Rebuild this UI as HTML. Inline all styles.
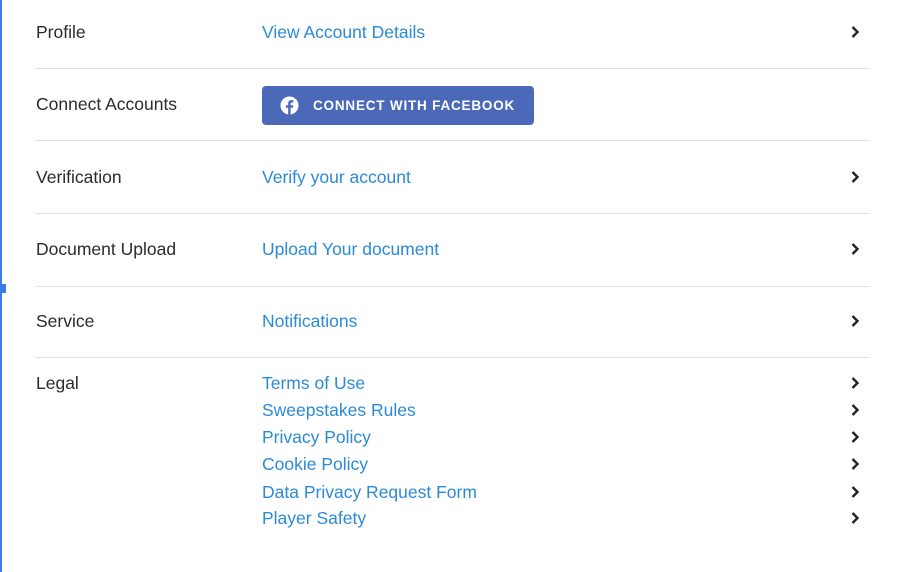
<!DOCTYPE html>
<html><head><meta charset="utf-8"><style>
*{margin:0;padding:0;box-sizing:border-box}
body{width:900px;height:572px;background:#fff;font-family:"Liberation Sans",sans-serif;position:relative;overflow:hidden;color:#2b2b2b}
.bar{position:absolute;left:0;top:0;width:2px;height:572px;background:#3b7ce8}
.sq{position:absolute;left:0;top:284px;width:6px;height:9px;background:#3b7ce8}
.hr{position:absolute;left:35px;width:835px;height:1px;background:#e2e2e2}
.t{position:absolute;font-size:17.5px;line-height:20px;white-space:nowrap}
.l{left:36px}
.a{left:262px;color:#2b8ad6}
.c{position:absolute;left:850px;width:10px;height:14px}
.btn{position:absolute;left:262px;top:86px;width:272px;height:39px;background:#4c68b9;border-radius:4px;color:#fff;font-size:13.5px;font-weight:bold;letter-spacing:0.8px;line-height:39px;padding-left:51px}
.fb{position:absolute;left:18px;top:10px;width:19px;height:19px}
</style></head><body>
<div class="bar"></div><div class="sq"></div>
<div class="t l" style="top:22px">Profile</div>
<div class="t a" style="top:22px">View Account Details</div>
<div class="hr" style="top:68px"></div>
<div class="t l" style="top:94px">Connect Accounts</div>
<div class="btn"><svg class="fb" viewBox="0 0 20 20"><circle cx="10" cy="10" r="9.5" fill="#fff"/><path d="M11.2 20V12.4h2.3l.4-2.7h-2.7V8.1c0-.8.3-1.3 1.4-1.3h1.4V4.4c-.3 0-1.1-.1-2-.1-2 0-3.4 1.2-3.4 3.4v2H6.3v2.7h2.3V20z" fill="#4c68b9"/></svg>CONNECT WITH FACEBOOK</div>
<div class="hr" style="top:140px"></div>
<div class="t l" style="top:167px">Verification</div>
<div class="t a" style="top:167px">Verify your account</div>
<div class="hr" style="top:213px"></div>
<div class="t l" style="top:239px">Document Upload</div>
<div class="t a" style="top:239px">Upload Your document</div>
<div class="hr" style="top:286px"></div>
<div class="t l" style="top:311px">Service</div>
<div class="t a" style="top:311px">Notifications</div>
<div class="hr" style="top:357px"></div>
<div class="t l" style="top:373px">Legal</div>
<div class="t a" style="top:373px">Terms of Use</div>
<div class="t a" style="top:400px">Sweepstakes Rules</div>
<div class="t a" style="top:427px">Privacy Policy</div>
<div class="t a" style="top:454px">Cookie Policy</div>
<div class="t a" style="top:482px">Data Privacy Request Form</div>
<div class="t a" style="top:508px">Player Safety</div>
<svg width="0" height="0" style="position:absolute"><defs><path id="ch" d="M2.5 2l5 5-5 5" fill="none" stroke="#222" stroke-width="2.4"/></defs></svg>
<svg class="c" style="top:25px"><use href="#ch"/></svg>
<svg class="c" style="top:170px"><use href="#ch"/></svg>
<svg class="c" style="top:242px"><use href="#ch"/></svg>
<svg class="c" style="top:314px"><use href="#ch"/></svg>
<svg class="c" style="top:376px"><use href="#ch"/></svg>
<svg class="c" style="top:403px"><use href="#ch"/></svg>
<svg class="c" style="top:430px"><use href="#ch"/></svg>
<svg class="c" style="top:457px"><use href="#ch"/></svg>
<svg class="c" style="top:485px"><use href="#ch"/></svg>
<svg class="c" style="top:511px"><use href="#ch"/></svg>
</body></html>
